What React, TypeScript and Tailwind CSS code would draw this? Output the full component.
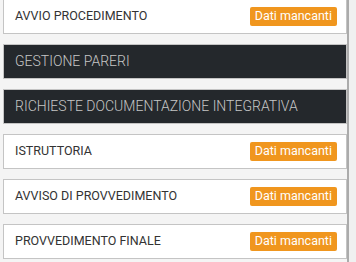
import React from "react";

type Step = { title: string; dark?: boolean; missing?: boolean };

const steps: Step[] = [
  { title: "AVVIO PROCEDIMENTO", missing: true },
  { title: "GESTIONE PARERI", dark: true },
  { title: "RICHIESTE DOCUMENTAZIONE INTEGRATIVA", dark: true },
  { title: "ISTRUTTORIA", missing: true },
  { title: "AVVISO DI PROVVEDIMENTO", missing: true },
  { title: "PROVVEDIMENTO FINALE", missing: true },
];

export default function App() {
  return (
    <div className="flex h-[262px] w-[356px] overflow-hidden bg-[#f0f0f0] font-['Roboto',sans-serif]">
      <div className="flex w-[349px] flex-col gap-[10px] border-r-2 border-[#ababab] bg-[#f4f4f4] pl-[3px]">
        {steps.map((s, i) => (
          <div
            key={s.title}
            className={`flex h-[35px] shrink-0 items-center justify-between border pl-[11px] pr-[9px] ${
              i === 0 ? "-mt-px" : ""
            } ${
              s.dark
                ? "border-[#c4c4c4] bg-[#24282c] text-[14px] font-light text-[#c6c6c6]"
                : "border-[#c4c4c4] bg-white text-[12.5px] text-[#333333]"
            }`}
          >
            <span>{s.title}</span>
            {s.missing && (
              <span className="flex h-[19px] items-center rounded-[2px] bg-[#f0961e] px-[5px] text-[12.5px] text-white">
                Dati mancanti
              </span>
            )}
          </div>
        ))}
      </div>
    </div>
  );
}
